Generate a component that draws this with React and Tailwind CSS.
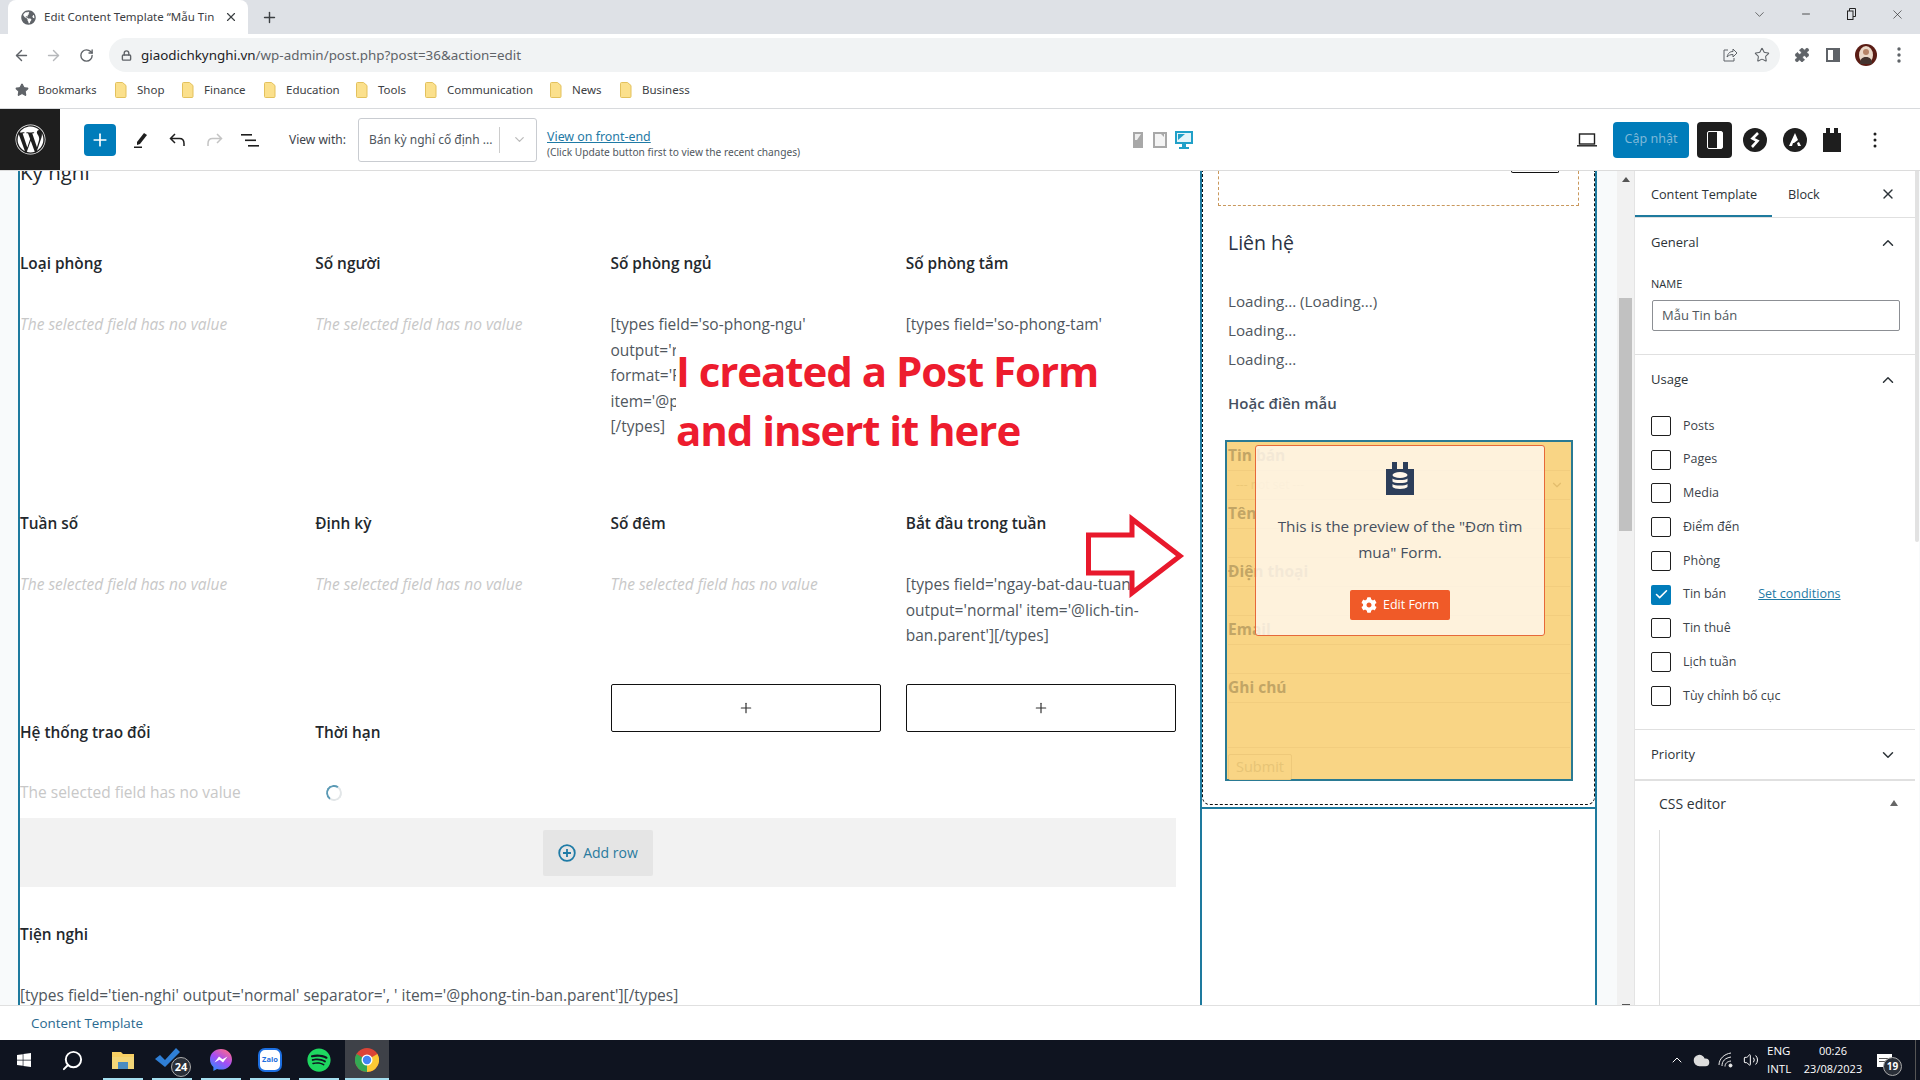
import React from "react";
import { ArrowLeft, ArrowRight, RotateCw, Lock, Star, Puzzle, X, Plus, ChevronDown, ChevronUp, Minus, Check, Search, Volume2, Cloud } from "lucide-react";
import { FaWordpress, FaWindows, FaSpotify, FaCog, FaGlobeAmericas } from "react-icons/fa";

const Folder = () => (
  <svg width="12" height="16" viewBox="0 0 12 16" className="shrink-0"><path d="M.5 1.5a1 1 0 0 1 1-1h6l3.500 3v11a1 1 0 0 1-1 1h-8.500a1 1 0 0 1-1-1z" fill="#fbe08c" stroke="#e3c15c" /></svg>
);

const bookmarks = [
  ["Shop", "w-[67px]"],
  ["Finance", "w-[82px]"],
  ["Education", "w-[92px]"],
  ["Tools", "w-[69px]"],
  ["Communication", "w-[125px]"],
  ["News", "w-[70px]"],
  ["Business", "w-[80px]"],
];

function TabBar() {
  return (
    <div className="h-[34px] bg-[#dee1e6] flex items-start shrink-0 relative">
      <div className="ml-[8px] w-[240px] h-[34px] bg-white rounded-t-lg flex items-center pl-[13px] pr-[10px]">
        <FaGlobeAmericas className="text-[#5f6368] w-[15px] h-[15px] shrink-0" />
        <span className="ml-[8px] text-[11.500px] text-[#3c4043] whitespace-nowrap overflow-hidden w-[172px]">Edit Content Template “Mẫu Tin b</span>
        <X className="ml-[8px] w-[14px] h-[14px] text-[#3c4043]" strokeWidth={2} />
      </div>
      <Plus className="ml-[13px] mt-[9px] w-[17px] h-[17px] text-[#3c4043]" strokeWidth={2} />
      <div className="ml-auto flex items-center h-[28px] text-[#222]">
        <ChevronDown className="w-[15px] h-[15px] mr-[33px]" strokeWidth={1} />
        <Minus className="w-[12px] h-[12px] mr-[34px]" strokeWidth={1.5} />
        <svg width="12" height="12" viewBox="0 0 12 12" className="mr-[32px]" fill="none" stroke="#222"><path d="M3.500 3V.5h6v8H7" /><rect x="1.500" y="3" width="5.500" height="8.500" /></svg>
        <X className="w-[15px] h-[15px] mr-[15px]" strokeWidth={1} />
      </div>
    </div>
  );
}

function AddressBar() {
  return (
    <div className="h-[38px] bg-white flex items-end shrink-0 text-[#5f6368]">
      <div className="flex items-center h-[34px] pl-[13px]">
        <ArrowLeft className="w-[17px] h-[17px]" strokeWidth={2} />
        <ArrowRight className="ml-[15px] w-[17px] h-[17px] text-[#b6b8bb]" strokeWidth={2} />
        <RotateCw className="ml-[17px] w-[15px] h-[15px]" strokeWidth={2.2} />
      </div>
      <div className="ml-[15px] w-[1671px] h-[34px] bg-[#f1f3f4] rounded-full flex items-center pl-[12px]">
        <Lock className="w-[11px] h-[11px] text-[#5f6368]" strokeWidth={3} />
        <span className="ml-[9px] text-[13.400px] whitespace-nowrap"><span className="text-[#202124]">giaodichkynghi.vn</span>/wp-admin/post.php?post=36&amp;action=edit</span>
        <svg width="16" height="16" viewBox="0 0 16 16" fill="none" stroke="#5f6368" className="ml-auto"><path d="M6 3H2v11h10v-3" /><path d="M5 10c1-4 3-5.500 6-5.500V2l4 4-4 4V7.500c-3 0-4.500 1-6 2.500z" /></svg>
        <Star className="ml-[16px] mr-[10px] w-[16px] h-[16px]" strokeWidth={1.6} />
      </div>
      <div className="flex items-center h-[34px]">
        <Puzzle className="ml-[14px] w-[16px] h-[16px] fill-[#5f6368]" strokeWidth={1} />
        <div className="ml-[16px] w-[14px] h-[14px] border-2 border-[#5f6368] flex justify-end"><div className="w-[5px] bg-[#5f6368]" /></div>
        <svg width="22" height="22" viewBox="0 0 22 22" className="ml-[15px]"><circle cx="11" cy="11" r="11" fill="#5a1c14" /><ellipse cx="11" cy="11" rx="7" ry="9" fill="#ead8c8" /><circle cx="11" cy="8" r="3" fill="#b58468" /><path d="M5 20c0-5 2-7 6-7s6 2 6 7z" fill="#44342f" /></svg>
        <svg width="4" height="16" viewBox="0 0 4 16" className="ml-[20px]" fill="#5f6368"><circle cx="2" cy="2" r="1.700" /><circle cx="2" cy="8" r="1.700" /><circle cx="2" cy="14" r="1.700" /></svg>
      </div>
    </div>
  );
}

function BookmarkBar() {
  return (
    <div className="h-[37px] bg-white border-b border-[#d8dadd] flex items-center shrink-0 text-[11.500px] text-[#3c4043] pl-[15px]">
      <Star className="w-[14px] h-[14px] fill-[#5f6368] text-[#5f6368]" />
      <span className="ml-[9px] w-[83px] text-[11px]">Bookmarks</span>
      {bookmarks.map(([n, w]) => (
        <div key={n} className={`flex items-center gap-[10px] ${w}`}><span className="-ml-[6px]"><Folder /></span><span>{n}</span></div>
      ))}
    </div>
  );
}

function WpToolbar() {
  return (
    <div className="h-[62px] bg-white border-b border-[#dcdcdc] flex items-center shrink-0 relative">
      <div className="w-[60px] h-[61px] bg-[#1e1e1e] flex items-center justify-center">
        <FaWordpress className="w-[31px] h-[31px] text-white" />
      </div>
      <div className="ml-[24px] w-[32px] h-[32px] bg-[#007cba] rounded-sm flex items-center justify-center"><Plus className="w-[20px] h-[20px] text-white" strokeWidth={2} /></div>
      <svg width="16" height="18" viewBox="0 0 16 18" className="ml-[17px]"><path d="M4 11 11 2l3 2-7 9-3 1z" fill="#1e1e1e" /><rect x="1" y="15.500" width="8" height="1.500" fill="#1e1e1e" /></svg>
      <svg width="20" height="16" viewBox="0 0 20 16" fill="none" stroke="#1e1e1e" strokeWidth="1.500" className="ml-[19px]"><path d="M7 2 2.500 6.500 7 11M3 6.500h8.500c3 0 4.500 2 4.500 5v2.500" /></svg>
      <svg width="20" height="16" viewBox="0 0 20 16" fill="none" stroke="#c4c4c4" strokeWidth="1.500" className="ml-[16px]"><path d="M13 2l4.500 4.500L13 11M17 6.500H8.500c-3 0-4.500 2-4.500 5v2.500" /></svg>
      <svg width="18" height="14" viewBox="0 0 18 14" fill="#1e1e1e" className="ml-[17px]"><rect x="0" y="1" width="11" height="1.600" /><rect x="4" y="6.500" width="11" height="1.600" /><rect x="7" y="12" width="11" height="1.600" /></svg>
      <span className="ml-[30px] text-[12px] text-[#3c434a] w-[69px]">View with:</span>
      <div className="w-[179px] h-[44px] border border-[#c9ccd1] rounded-[3px] flex items-center pl-[10px] text-[12px] text-[#50575e]">
        <span className="w-[130px] whitespace-nowrap overflow-hidden">Bán kỳ nghỉ cố định ...</span>
        <div className="w-px h-[26px] bg-[#ccc]" />
        <ChevronDown className="ml-[12px] w-[15px] h-[15px] text-[#bbb]" strokeWidth={2} />
      </div>
      <div className="ml-[10px] mt-[10px] flex flex-col">
        <span className="text-[12.400px] leading-[16px] text-[#1f7aa5] underline">View on front-end</span>
        <span className="text-[10.200px] leading-[15px] text-[#50575e] w-[300px] whitespace-nowrap">(Click Update button first to view the recent changes)</span>
      </div>
      <div className="ml-[286px] flex items-center">
        <svg width="10" height="16" viewBox="0 0 10 16"><rect width="10" height="16" fill="#a8a8a8" /><path d="M2 2h6L4 8H2z" fill="#eee" /></svg>
        <svg width="14" height="16" viewBox="0 0 14 16" className="ml-[10px]"><rect width="14" height="16" fill="#a8a8a8" /><rect x="2" y="2" width="10" height="12" fill="#f4f4f4" /><path d="M8 2h3v3z" fill="#a8a8a8" /></svg>
        <svg width="18" height="18" viewBox="0 0 18 18" className="ml-[8px]"><rect width="18" height="13" fill="#20a0c8" /><rect x="2" y="2" width="14" height="9" fill="#e5f4f9" /><path d="M3 3h7L3 9z" fill="#20a0c8" /><rect x="7" y="13" width="4" height="3" fill="#20a0c8" /><rect x="4" y="16" width="10" height="2" fill="#20a0c8" /></svg>
      </div>
      <div className="ml-auto flex items-center mr-[43px]">
        <svg width="20" height="14" viewBox="0 0 20 14" fill="none" stroke="#1e1e1e" strokeWidth="1.400"><rect x="2.500" y="1" width="15" height="10" /><path d="M0 12.800h20" /></svg>
        <div className="ml-[16px] w-[76px] h-[36px] bg-[#007cba] rounded-sm flex items-center justify-center text-[12.500px] text-[#7fb8d8]">Cập nhật</div>
        <div className="ml-[8px] w-[35px] h-[36px] bg-[#1e1e1e] rounded-sm flex items-center justify-center"><div className="w-[16px] h-[18px] border-[1.500px] border-white rounded-[2px] flex justify-end"><div className="w-[5px] bg-white" /></div></div>
        <svg width="24" height="24" viewBox="0 0 24 24" className="ml-[11px]"><circle cx="12" cy="12" r="12" fill="#1e1e1e" /><path d="M15 5 9.500 10.500 14.500 13 9 19" fill="none" stroke="#fff" strokeWidth="2.600" /></svg>
        <svg width="24" height="24" viewBox="0 0 24 24" className="ml-[16px]"><circle cx="12" cy="12" r="12" fill="#1e1e1e" /><path d="M6 18 12 5l3 7-4 3h-1l-1 3zM14 15l2-1 2 4h-3z" fill="#fff" /></svg>
        <svg width="18" height="24" viewBox="0 0 18 24" className="ml-[16px]" fill="#1e1e1e"><path d="M0 5h3V0h4v5h4V0h4v5h3v19H0z" /></svg>
        <svg width="4" height="16" viewBox="0 0 4 16" className="ml-[32px]" fill="#1e1e1e"><circle cx="2" cy="2" r="1.500" /><circle cx="2" cy="8" r="1.500" /><circle cx="2" cy="14" r="1.500" /></svg>
      </div>
    </div>
  );
}

const Empty = () => <div className="text-[#c8c8c8] italic">The selected field has no value</div>;
const Head = ({ children }) => <div className="h-[26px] font-semibold text-[15.400px] text-[#23282d] leading-[25px]">{children}</div>;

function Cell({ title, children, className = "" }) {
  return (
    <div className={className}>
      <Head>{title}</Head>
      <div className="mt-[35px] leading-[25.500px] text-[#50575e]">{children}</div>
    </div>
  );
}

const PlusBox = () => (
  <div className="h-[48px] border border-[#111] rounded-[2px] flex items-center justify-center"><Plus className="w-[16px] h-[16px] text-[#333]" strokeWidth={1.800} /></div>
);

function LeftColumn() {
  return (
    <div className="w-[1182px] border-l-2 border-[#1e7a9e] pr-[24px] bg-white text-[15.500px] shrink-0">
      <div className="-mt-[14px] h-[30px] text-[20.500px] leading-[30px] text-[#23282d]">Kỳ nghỉ</div>
      <div className="mt-[64px] grid grid-cols-4 gap-x-[25px]">
        <Cell title="Loại phòng" className="h-[260px]"><Empty /></Cell>
        <Cell title="Số người"><Empty /></Cell>
        <Cell title="Số phòng ngủ">
          [types field='so-phong-ngu'<br />output='raw'<br />format='FIELD'<br />item='@phong'<br />[/types]
        </Cell>
        <Cell title="Số phòng tắm">[types field='so-phong-tam'</Cell>
        <Cell title="Tuần số" className="h-[173px]"><Empty /></Cell>
        <Cell title="Định kỳ"><Empty /></Cell>
        <Cell title="Số đêm"><Empty /></Cell>
        <Cell title="Bắt đầu trong tuần">
          [types field='ngay-bat-dau-tuan'<br />output='normal' item='@lich-tin-<br />ban.parent'][/types]
        </Cell>
        <div className="h-[134px] pt-[36px]">
          <Head>Hệ thống trao đổi</Head>
          <div className="mt-[34px] leading-[25.500px] text-[#c8c8c8]">The selected field has no value</div>
        </div>
        <div className="pt-[36px]">
          <Head>Thời hạn</Head>
          <div className="mt-[39px] ml-[11px] w-[16px] h-[16px] rounded-full border-2 border-[#e2e6e8] border-t-[#5b9ab5] border-l-[#5b9ab5] -rotate-[10deg]" />
        </div>
        <PlusBox />
        <PlusBox />
      </div>
      <div className="h-[69px] bg-[#f2f2f2] flex items-center justify-center">
        <div className="w-[110px] h-[46px] bg-[#e5e5e5] rounded-[2px] flex items-center justify-center gap-[7px] text-[14px] text-[#2a7a9e]">
          <svg width="18" height="18" viewBox="0 0 18 18" fill="none" stroke="#1f7ba6" strokeWidth="1.800"><circle cx="9" cy="9" r="7.800" /><path d="M9 5v8M5 9h8" /></svg>
          Add row
        </div>
      </div>
      <div className="mt-[35px]"><Head>Tiện nghi</Head></div>
      <div className="mt-[34px] leading-[26px] text-[#50575e] whitespace-nowrap">[types field='tien-nghi' output='normal' separator=', ' item='@phong-tin-ban.parent'][/types]</div>
    </div>
  );
}

function FormPreview() {
  const Label = ({ children }) => <div className="h-[29px] leading-[27px] font-bold text-[15.500px] text-[#c2a565] border-b border-[#f2cd7e]">{children}</div>;
  const Field = ({ className = "h-[29px]" }) => <div className={`${className} border-b border-[#f2cd7e]`} />;
  return (
    <div className="relative mt-[24px] ml-[22px] mr-[21px] h-[341px] border-2 border-[#2a7a93] bg-[#f9d585] px-[1px] text-[#c2a565]">
      <Label>Tin bán</Label>
      <div className="h-[29px] border-b border-[#f2cd7e] flex items-center pl-[8px] pr-[6px] text-[12px] text-[#ecc877]"><span>--- not set ---</span><ChevronDown className="ml-auto w-[14px] h-[14px] text-[#e3bd6d]" /></div>
      <Label>Tên</Label><Field />
      <Label>Điện thoại</Label><Field />
      <Label>Email</Label><Field />
      <Label>Ghi chú</Label><Field className="h-[45px]" />
      <div className="mt-[6px] w-[64px] h-[26px] border border-[#eec97a] rounded-[2px] flex items-center justify-center text-[14.500px] text-[#e7c476]">Submit</div>
      <div className="absolute left-[28px] top-[3px] w-[290px] h-[191px] bg-[#fff9f2]/80 border border-[#e6693a] rounded-[3px] flex flex-col items-center text-[15.300px] text-[#454f5e]">
        <svg width="28" height="33" viewBox="0 0 28 33" className="mt-[16px]">
          <path fill="#2c3e5a" d="M0 7h6V0h5v7h6V0h5v7h6v26H0z" />
          <ellipse cx="14" cy="13" rx="7.500" ry="3" fill="#fff7ea" />
          <path d="M6.500 16.500c2 2 13 2 15 0v3c-2 2-13 2-15 0zM6.500 22c2 2 13 2 15 0v3c-2 2.500-13 2.500-15 0z" fill="#fff7ea" />
        </svg>
        <div className="mt-[18px] w-[260px] text-center leading-[26px]">This is the preview of the "Đơn tìm mua" Form.</div>
        <div className="mt-[25px] w-[100px] h-[30px] bg-[#f05a28] rounded-[2px] flex items-center justify-center gap-[6px] text-[12.500px] text-white">
          <FaCog className="w-[16px] h-[16px]" />Edit Form
        </div>
      </div>
    </div>
  );
}

function RightColumn() {
  return (
    <div className="w-[397px] border-x-2 border-[#1e7a9e] bg-white shrink-0">
      <div className="h-[634px] border-x border-b border-dashed border-[#111] rounded-b-lg">
        <div className="ml-[15px] mr-[15px] h-[35px] border-x border-b border-dashed border-[#c9985c] relative">
          <div className="absolute right-[19px] top-0 w-[48px] h-[2px] border-x border-b border-[#111] rounded-b-[2px]" />
        </div>
        <div className="mt-[22px] ml-[25px] text-[19.500px] leading-[30px] font-medium text-[#2b3243]">Liên hệ</div>
        <div className="mt-[29px] ml-[25px] text-[15.200px] leading-[29px] text-[#50575e]">
          <div>Loading... (Loading...)</div>
          <div>Loading...</div>
          <div>Loading...</div>
        </div>
        <div className="mt-[16px] ml-[25px] text-[15px] leading-[26px] font-semibold text-[#454f5e]">Hoặc điền mẫu</div>
        <FormPreview />
      </div>
      <div className="mt-[2px] border-t-2 border-[#1e7a9e]" />
    </div>
  );
}

function Check2({ label, checked, link }) {
  return (
    <div className="h-[33.750px] flex items-center">
      {checked ? (
        <div className="w-[20px] h-[20px] bg-[#007cba] rounded-[2px] flex items-center justify-center"><Check className="w-[15px] h-[15px] text-white" strokeWidth={2.500} /></div>
      ) : (
        <div className="w-[20px] h-[20px] border border-[#1e1e1e] rounded-[2px]" />
      )}
      <span className="ml-[12px] text-[12.500px] text-[#3c434a]">{label}</span>
      {link && <span className="ml-[32px] text-[12.500px] text-[#1f7aa5] underline">{link}</span>}
    </div>
  );
}

function Sidebar() {
  return (
    <div className="w-[285px] shrink-0 bg-white flex overflow-hidden border-l border-[#e4e4e4]">
      <div className="w-[280px] text-[13px] text-[#2c3338]">
        <div className="h-[47px] border-b border-[#e0e0e0] flex items-end relative">
          <div className="w-[137px] h-[46px] border-b-2 border-[#1e7a9e] pl-[16px] leading-[46px] text-[12.700px]">Content Template</div>
          <div className="ml-[16px] h-[46px] leading-[46px] text-[12.700px]">Block</div>
          <X className="ml-auto mr-[19px] mb-[15px] w-[16px] h-[16px]" strokeWidth={2} />
        </div>
        <div className="h-[137px] border-b border-[#e0e0e0] pl-[16px] pr-[18px] relative">
          <div className="h-[49px] flex items-center justify-between font-medium"><span>General</span><ChevronUp className="w-[18px] h-[18px]" strokeWidth={2} /></div>
          <div className="mt-[9px] text-[11px] leading-[16px]">NAME</div>
          <div className="mt-[8px] ml-[1px] w-[248px] h-[31px] border border-[#8c8f94] rounded-[2px] pl-[9px] flex items-center text-[#50575e]">Mẫu Tin bán</div>
        </div>
        <div className="h-[375px] border-b border-[#e0e0e0] pl-[16px] pr-[18px]">
          <div className="h-[49px] flex items-center justify-between font-medium"><span>Usage</span><ChevronUp className="w-[18px] h-[18px]" strokeWidth={2} /></div>
          <div className="mt-[5px]">
            <Check2 label="Posts" />
            <Check2 label="Pages" />
            <Check2 label="Media" />
            <Check2 label="Điểm đến" />
            <Check2 label="Phòng" />
            <Check2 label="Tin bán" checked link="Set conditions" />
            <Check2 label="Tin thuê" />
            <Check2 label="Lịch tuần" />
            <Check2 label="Tùy chỉnh bố cục" />
          </div>
        </div>
        <div className="h-[51px] border-b-2 border-[#e0e0e0] pl-[16px] pr-[18px] flex items-center justify-between font-medium"><span>Priority</span><ChevronDown className="w-[18px] h-[18px]" strokeWidth={2} /></div>
        <div className="pl-[24px] pr-[17px]">
          <div className="h-[44px] flex items-center justify-between text-[14px] font-medium"><span>CSS editor</span><span className="w-0 h-0 border-x-[4px] border-x-transparent border-b-[6px] border-b-[#666]" /></div>
          <div className="h-[200px] w-px bg-[#dcdcdc] mt-[5px]" />
        </div>
      </div>
      <div className="w-[5px] h-[371px] bg-[#e2e2e2] rounded-b-sm" />
    </div>
  );
}

function Main() {
  return (
    <div className="flex-1 flex overflow-hidden min-h-0 bg-[#f8fafb] relative" style={{ fontFamily: '"Open Sans", sans-serif' }}>
      <div className="w-[18px] shrink-0" />
      <LeftColumn />
      <RightColumn />
      <div className="w-[20px] shrink-0" />
      <div className="w-[17px] shrink-0 bg-[#f1f1f1] flex flex-col items-center pt-[6px]">
        <span className="w-0 h-0 border-x-[4px] border-x-transparent border-b-[5px] border-b-[#555]" />
        <div className="mt-[116px] w-[13px] h-[233px] bg-[#c1c1c1]" />
        <div className="mt-auto w-[8px] h-[1px] bg-[#555]" />
      </div>
      <Sidebar />
      <div className="absolute left-[676px] top-[170px] w-[440px] h-[125px] bg-white text-[42px] tracking-[-1.050px] leading-[59px] font-bold text-[#ed1c2e] whitespace-nowrap">
        I created a Post Form<br />and insert it here
      </div>
      <svg width="100" height="84" viewBox="0 0 100 84" className="absolute left-[1085px] top-[343px]">
        <path d="M3.500 21H47V5l48 37-48 37V59H3.500z" fill="#fff" stroke="#e8192c" strokeWidth="5" />
      </svg>
    </div>
  );
}

function Footer() {
  return (
    <div className="h-[35px] pt-[1px] shrink-0 bg-white border-t border-[#e0e0e0] flex items-center pl-[31px] text-[13.400px] font-medium text-[#2a6a90]" style={{ fontFamily: '"Open Sans", sans-serif' }}>Content Template</div>
  );
}

const Slot = ({ w, active, children }) => (
  <div className={`${w} h-[40px] flex items-center justify-center relative ${active ? "bg-[#3e4148]" : ""}`}>
    {children}
    <div className="absolute bottom-0 left-0 right-0 h-[2px] bg-[#a5dff0]" />
  </div>
);

function Taskbar() {
  return (
    <div className="h-[40px] shrink-0 bg-[#0f1420] flex items-center text-white relative" style={{ fontFamily: '"Open Sans", sans-serif' }}>
      <FaWindows className="ml-[16px] w-[16px] h-[16px]" />
      <Search className="ml-[29px] w-[23px] h-[23px] -scale-x-100" strokeWidth={2} />
      <div className="ml-[19px] flex gap-[9px]">
        <Slot w="w-[40px]">
          <svg width="22" height="18" viewBox="0 0 22 18"><path d="M0 1h9l2 2h11v13H0z" fill="#f7cf63" /><rect x="0" y="6" width="22" height="12" fill="#f3d678" /><rect x="6" y="11" width="10" height="7" fill="#4a8cc2" /></svg>
        </Slot>
        <Slot w="w-[40px]">
          <div className="relative w-[34px] h-[26px]">
            <svg width="26" height="22" viewBox="0 0 26 22" className="absolute left-0 top-0"><path d="M0 12l5-4 5 5L21 1l4 4L10 20z" fill="#2f7fd6" /></svg>
            <div className="absolute right-[-2px] bottom-[-4px] w-[20px] h-[20px] rounded-full bg-[#2a2f38] border border-[#aaa] flex items-center justify-center text-[11px] font-bold">24</div>
          </div>
        </Slot>
        <Slot w="w-[40px]">
          <svg width="24" height="24" viewBox="0 0 24 24">
            <defs><linearGradient id="msg" x1="0.2" y1="1" x2="0.8" y2="0"><stop offset="0" stopColor="#2f8cff" /><stop offset="0.5" stopColor="#a44df5" /><stop offset="1" stopColor="#ff6a8a" /></linearGradient></defs>
            <path d="M12 1C5.700 1 1 5.500 1 11.400c0 3.100 1.300 5.800 3.400 7.600V23l3.600-2c1.200.4 2.600.6 4 .6 6.300 0 11-4.400 11-10.200S18.300 1 12 1z" fill="url(#msg)" />
            <path d="M5.500 14.500 10 8.500l3.500 2.800 5-2.800-4.500 6-3.500-2.800z" fill="#fff" />
          </svg>
        </Slot>
        <Slot w="w-[40px]">
          <div className="w-[24px] h-[24px] bg-white border-2 border-[#1d6fe0] rounded-[7px] flex items-center justify-center text-[7.500px] font-bold text-[#1d6fe0]">Zalo</div>
        </Slot>
        <Slot w="w-[40px]"><FaSpotify className="w-[24px] h-[24px] text-[#1ed760]" /></Slot>
        <div className="-ml-[3px]">
          <Slot w="w-[44px]" active>
            <svg width="24" height="24" viewBox="0 0 24 24"><circle cx="12" cy="12" r="12" fill="#db4437" /><path d="M12 12 22.400 6A12 12 0 0 1 12 24z" fill="#fcc934" /><path d="M12 12 12 24A12 12 0 0 1 1.600 6z" fill="#34a853" /><circle cx="12" cy="12" r="5.500" fill="#fff" /><circle cx="12" cy="12" r="4.200" fill="#4285f4" /></svg>
          </Slot>
        </div>
      </div>
      <div className="ml-auto flex items-center text-[11.500px]">
        <ChevronUp className="w-[16px] h-[16px] mr-[8px]" strokeWidth={1.500} />
        <Cloud className="w-[17px] h-[17px] fill-[#ddd] text-[#ddd] mr-[8px]" />
        <svg width="16" height="16" viewBox="0 0 16 16" fill="none" stroke="#eee" strokeWidth="1" className="mr-[9px]"><path d="M1 13C1 7 6 2 13 1M4 14c0-5 3-8 9-9M7 14.500c0-3 2-5 6-5.500" /><circle cx="12.500" cy="13.500" r="1.500" fill="#eee" /></svg>
        <Volume2 className="w-[16px] h-[16px] mr-[8px]" strokeWidth={1.500} />
        <div className="w-[35px] leading-[18px]"><div>ENG</div><div>INTL</div></div>
        <div className="w-[62px] leading-[18px] text-center text-[11px]"><div>00:26</div><div>23/08/2023</div></div>
        <div className="relative ml-[13px] mr-[28px] w-[15px] h-[13px] bg-white flex flex-col justify-center gap-[2px] px-[2px]">
          <div className="h-px bg-[#555]" />
          <div className="h-px bg-[#555]" />
          <div className="absolute right-[-10px] bottom-[-9px] w-[19px] h-[19px] rounded-full bg-[#2a2f38] border border-[#aaa] flex items-center justify-center text-[10px] font-bold">19</div>
        </div>
      </div>
      <div className="absolute right-[4px] top-0 h-full w-px bg-[#555]" />
    </div>
  );
}

export default function App() {
  return (
    <div className="w-[1920px] h-[1080px] flex flex-col overflow-hidden bg-white" style={{ fontFamily: '"Noto Sans", sans-serif' }}>
      <TabBar />
      <AddressBar />
      <BookmarkBar />
      <WpToolbar />
      <Main />
      <Footer />
      <Taskbar />
    </div>
  );
}
